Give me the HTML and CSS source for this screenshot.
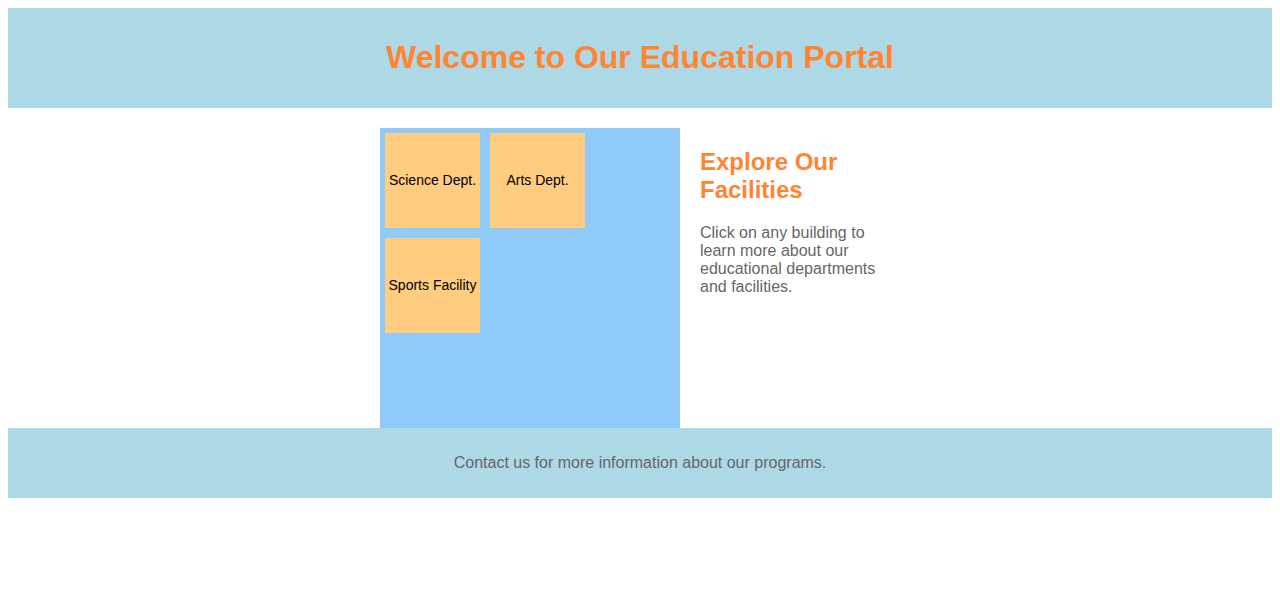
FILE: index.html
```html
<!DOCTYPE html>
<html lang="en">
<head>
<meta charset="utf-8">
<title>Education Portal</title>
<link rel="stylesheet" href="styles.css">
</head>
<body>
<header class="site-header">
  <h1 class="site-title">Welcome to Our Education Portal</h1>
</header>
<main class="main">
  <div class="campus-map">
    <div class="building">Science Dept.</div>
    <div class="building">Arts Dept.</div>
    <div class="building">Sports Facility</div>
  </div>
  <section class="info">
    <h2 class="info-title">Explore Our Facilities</h2>
    <p class="info-text">Click on any building to learn more about our educational departments and facilities.</p>
  </section>
</main>
<footer class="site-footer">
  <p class="footer-text">Contact us for more information about our programs.</p>
</footer>
</body>
</html>
```
FILE: styles.css
```css
body {
  margin: 8px;
  font-family: "Liberation Sans", Arial, sans-serif;
  background: #ffffff;
}
.site-header {
  box-sizing: border-box;
  height: 100px;
  padding-bottom: 2px;
  background: #add8e6;
  display: flex;
  align-items: center;
  justify-content: center;
}
.site-title {
  margin: 0;
  font-size: 32px;
  font-weight: bold;
  color: #ff8533;
}
.main {
  margin-top: 20px;
  display: flex;
  justify-content: center;
  gap: 20px;
}
.campus-map {
  width: 300px;
  height: 300px;
  background: #90caf9;
  display: flex;
  flex-wrap: wrap;
  align-content: flex-start;
}
.building {
  box-sizing: border-box;
  width: 95px;
  height: 95px;
  margin: 5px;
  padding-bottom: 2px;
  background: #ffcc80;
  display: flex;
  align-items: center;
  justify-content: center;
  font-size: 14px;
  color: #000;
  text-align: center;
}
.info {
  width: 200px;
}
.info-title {
  font-size: 24px;
  color: #ff8533;
  margin: 20px 0;
}
.info-text {
  font-size: 16px;
  color: #666666;
  margin: 0;
  line-height: 18px;
}
.site-footer {
  height: 70px;
  background: #add8e6;
  display: flex;
  align-items: center;
  justify-content: center;
}
.footer-text {
  margin: 0;
  font-size: 16px;
  color: #666666;
}
```
